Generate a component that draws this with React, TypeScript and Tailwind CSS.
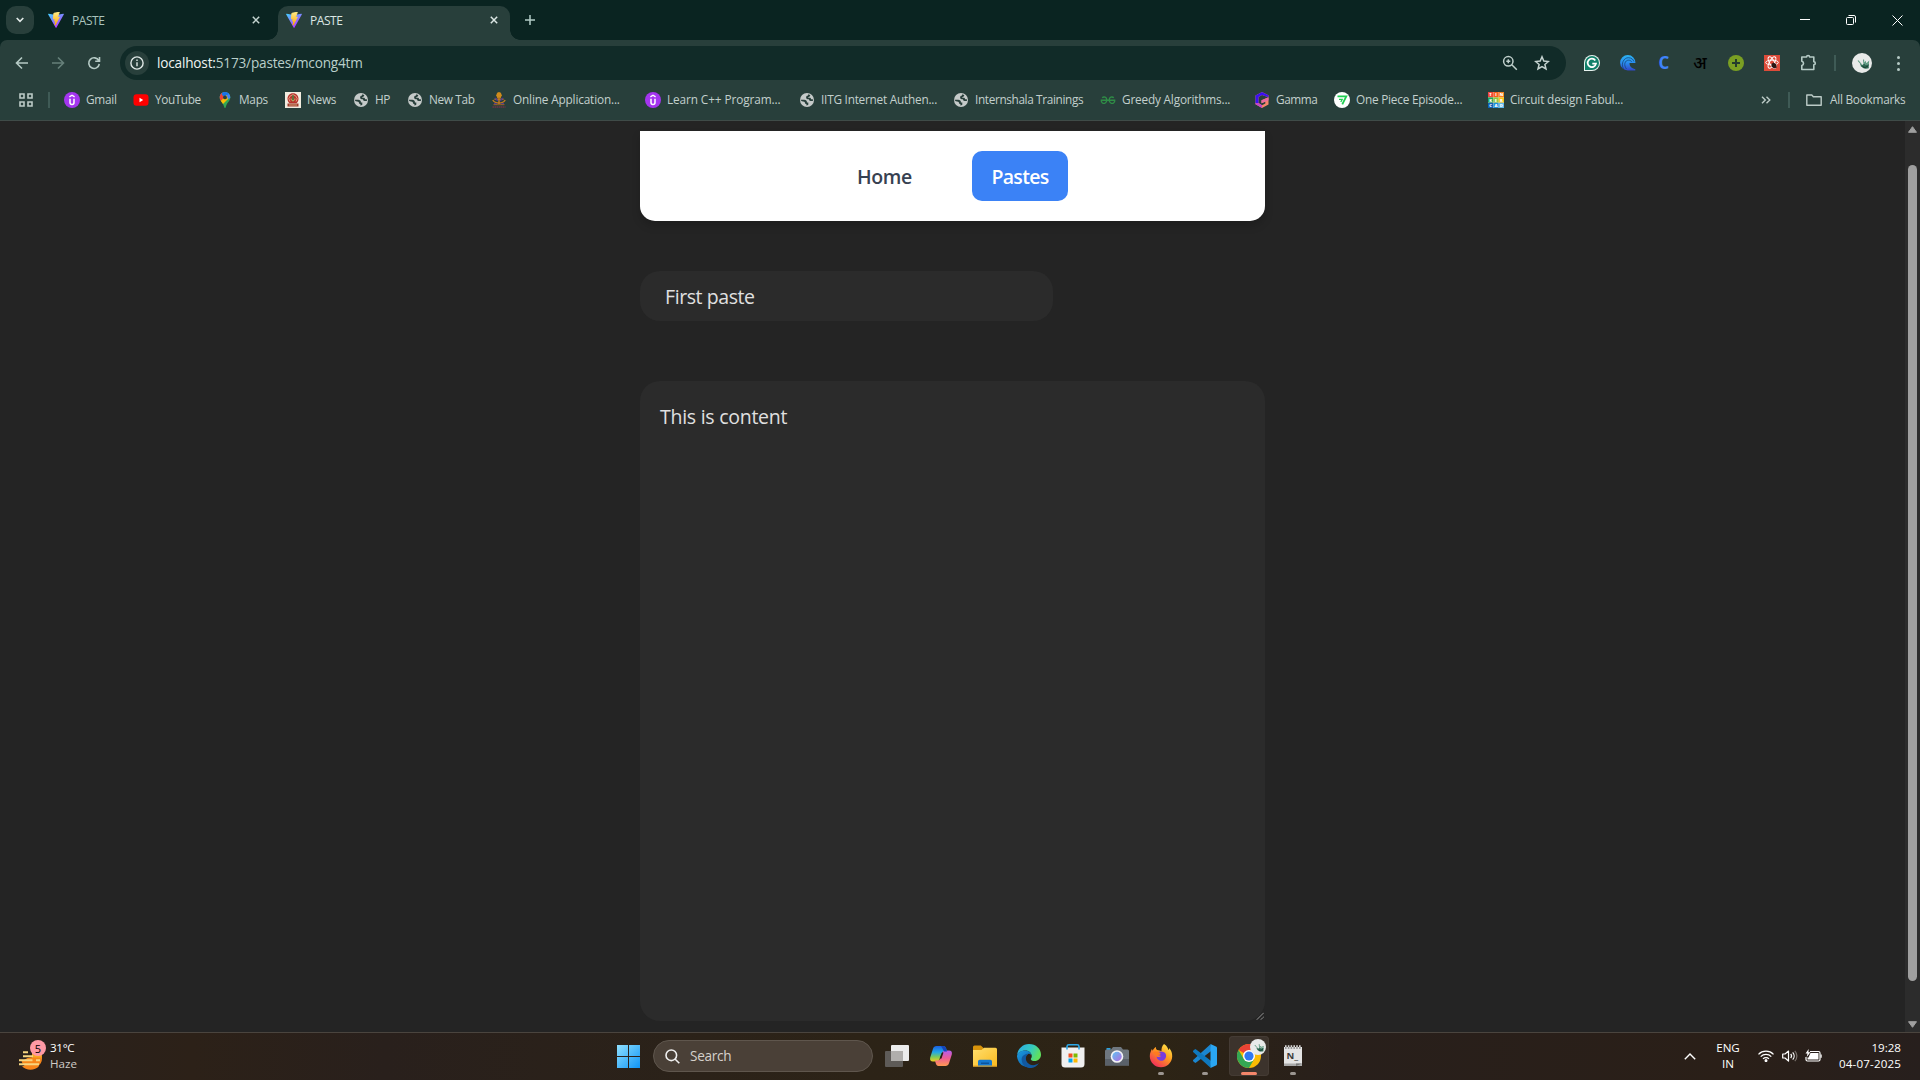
import React from "react";

type IconProps = { className?: string };

const ViteLogo = () => (
  <svg viewBox="0 0 16 16" className="size-4 shrink-0">
    <defs>
      <linearGradient id="viteA" x1="0" y1="0" x2="0.6" y2="1">
        <stop offset="0" stopColor="#41d1ff" />
        <stop offset="1" stopColor="#bd34fe" />
      </linearGradient>
      <linearGradient id="viteB" x1="0" y1="0" x2="0" y2="1">
        <stop offset="0" stopColor="#ffea83" />
        <stop offset="1" stopColor="#ffa800" />
      </linearGradient>
    </defs>
    <path d="M15.8 2.4 8.5 15.6a.5.5 0 0 1-.9 0L.2 2.4a.5.5 0 0 1 .5-.7L8 3l7.300-1.300a.5.5 0 0 1 .5.7Z" fill="url(#viteA)" />
    <path d="M11.300.3 5.900 1.300 5.500 7l1.700-.3-.5 2.500 1.200-.3-.8 4.200 4.200-8-1.900.4.8-2.500Z" fill="url(#viteB)" stroke="url(#viteB)" strokeWidth="1" />
  </svg>
);

const CloseX = ({ className = "" }: IconProps) => (
  <svg viewBox="0 0 8 8" className={"size-2 shrink-0 " + className}>
    <path d="M.8.8l6.400 6.400M7.200.8.8 7.200" stroke="currentColor" strokeWidth="1.500" />
  </svg>
);

const Udemy = () => (
  <svg viewBox="0 0 16 16" className="size-4 shrink-0">
    <circle cx="8" cy="8" r="8" fill="#a435f0" />
    <path d="M5.400 4.900 8 3.300l2.600 1.600" fill="none" stroke="#fff" strokeWidth="1.300" />
    <path d="M6 6.800v3.700a2 2 0 0 0 4 0V6.800" fill="none" stroke="#fff" strokeWidth="1.500" />
  </svg>
);

const YouTube = () => (
  <svg viewBox="0 0 16 16" className="size-4 shrink-0">
    <rect x=".5" y="2.300" width="15" height="11.400" rx="3" fill="#f00" />
    <path d="M6.500 5.800v4.400L10.200 8Z" fill="#fff" />
  </svg>
);

const MapsPin = () => (
  <svg viewBox="0 0 16 16" className="size-4 shrink-0">
    <defs>
      <clipPath id="pin">
        <path d="M8 0a5.300 5.300 0 0 1 5.300 5.400c0 3.600-3.600 4.900-4.600 9.900-.2 1-1.200 1-1.400 0-1-5-4.600-6.300-4.600-9.900A5.300 5.300 0 0 1 8 0Z" />
      </clipPath>
    </defs>
    <g clipPath="url(#pin)">
      <rect width="16" height="16" fill="#34a853" />
      <path d="M0 0h16v5L9 8 0 4Z" fill="#4285f4" />
      <path d="M0 0h5l4 4-6 6-3-3Z" fill="#ea4335" />
      <path d="M5 0h9l-6 5-3-2Z" fill="#1a73e8" />
      <path d="M3 9.800 9.500 3l1.500 4-6 6Z" fill="#fbbc04" />
    </g>
    <circle cx="8" cy="5.400" r="1.900" fill="#283f3b" />
  </svg>
);

const NewsIcon = () => (
  <svg viewBox="0 0 16 16" className="size-4 shrink-0">
    <rect width="16" height="16" fill="#f2ecdf" />
    <path d="M8 1.300c3.500 0 5.500 2.500 5.500 5.500 0 2-1 3.500-2 4.500h-7c-1-1-2-2.500-2-4.500 0-3 2-5.500 5.500-5.500Z" fill="#b8322a" />
    <path d="M5 9.500a4 4 0 1 1 6 0" fill="none" stroke="#eeb79b" strokeWidth=".8" />
    <path d="M8 3.200v6" stroke="#3f8d43" strokeWidth="1.400" />
    <path d="M6 6.500c0 3 4 3 4 0" stroke="#d9c27a" strokeWidth=".9" fill="none" />
    <path d="M2.500 11.500h11v3h-11Z" fill="#a03a2c" />
    <path d="M4 13h8" stroke="#e6cf9a" strokeWidth=".7" />
  </svg>
);

const Globe = () => (
  <svg viewBox="0 0 16 16" className="size-4 shrink-0">
    <circle cx="8" cy="8" r="7" fill="#c5cac9" />
    <path d="M1.600 7.800h3.700c1.600 0 2.600 1 2.600 2.200v.5h1.400v2.300c-.5.5-1.200.8-1.900.8v-1.500c-1-.1-1.600-.7-1.600-1.600v-.6C3.400 9.700 1.800 9 1.600 7.800Z" fill="#283f3b" />
    <path d="M9.300 2.300c1 .2 1.500.5 2 .9-.2 1.200-1 1.700-2 1.800v.8h1.500c.8 0 1.300.6 1.300 1.500h1.800v1.600h-2.300c-1 0-1.600-.6-1.600-1.600-1.500 0-2.900-.4-2.900-1.900 0-1.300.8-1.900 1.900-2Z" fill="#283f3b" />
  </svg>
);

const Emblem = () => (
  <svg viewBox="0 0 16 16" className="size-4 shrink-0">
    <path d="M5.200 3.200 6.200.8 8 0l1.800.8 1 2.400L9.700 6H6.300Z" fill="#d08b1c" />
    <path d="M8 5v7M1.800 8c2.300 4 10.100 4 12.400 0M3.500 7.200h9" stroke="#c07a1e" strokeWidth="1.500" fill="none" />
    <path d="M4 6 6.800 8.700M12 6 9.200 8.700M3 11.500l3 .7M13 11.500l-3 .7" stroke="#4f3a94" strokeWidth="1.500" />
    <path d="M2.500 12.700h11" stroke="#a8651d" strokeWidth=".9" />
    <path d="M1.500 14.900h13" stroke="#6b3548" strokeWidth="1.500" strokeDasharray="1.500 .5" />
  </svg>
);

const Gfg = () => (
  <svg viewBox="0 0 16 16" className="size-4 shrink-0">
    <path
      d="M2.200 5.700C3.900 4.200 6.800 5 6.800 8s-2.700 4-4.400 3C1.500 10.500 1.200 9.500 1.300 8.300h13.400c.1 1.200-.2 2.200-1.100 2.700-1.700 1-4.400 0-4.400-3s2.900-3.800 4.600-2.300"
      fill="none"
      stroke="#2f8d46"
      strokeWidth="1.400"
    />
  </svg>
);

const GammaIcon = () => (
  <svg viewBox="0 0 16 16" className="size-4 shrink-0">
    <path d="M8 0 14.500 3.200v2L8 2.900 4.500 5v6L8 13.200l3.300-1.700V9.700L7.500 11.300V8.200L14.500 5.200v7.300L8 16l-6.500-3.700V3.500Z" fill="#f4856b" />
    <path d="M7.500 8.200 14.500 5.200v3l-7 3.100Z" fill="#e86aa0" />
    <path d="M1.500 10.500 4.500 11 8 13.200 8 16l-6.500-3.700Z" fill="#c247c9" />
    <path d="M8 0l6.500 3.200v2L8 2.900 4.500 5v6l-3 0V3.500Z" fill="#3a10f2" />
  </svg>
);

const OnePiece = () => (
  <svg viewBox="0 0 16 16" className="size-4 shrink-0">
    <circle cx="8" cy="8" r="8" fill="#fff" />
    <path d="M3.500 4.300h8.800L8.300 12.300" fill="none" stroke="#1fce52" strokeWidth="1.800" />
    <path d="M5 7.300h3.200L6.800 10" fill="none" stroke="#1fce52" strokeWidth="1.300" />
  </svg>
);

const tinker = [
  ["T", "#f0473a"],
  ["I", "#f5601f"],
  ["N", "#f58220"],
  ["K", "#1fa55b"],
  ["E", "#8cc63e"],
  ["R", "#f5c518"],
  ["C", "#0f62b5"],
  ["A", "#1d8fdc"],
  ["D", "#5bb8ec"],
];
const Tinkercad = () => (
  <svg viewBox="0 0 16 16" className="size-4 shrink-0">
    <rect width="16" height="16" fill="#f3d9c0" />
    {tinker.map(([c, color], i) => {
      const x = (i % 3) * 5.4;
      const y = Math.floor(i / 3) * 5.4;
      return (
        <g key={c}>
          <rect x={x} y={y} width="5.200" height="5.200" fill={color} />
          <text x={x + 2.6} y={y + 4.1} fontSize="4.200" fontWeight="800" textAnchor="middle" fill="#fff">
            {c}
          </text>
        </g>
      );
    })}
  </svg>
);

const bookmarks: { icon: React.ReactNode; label: string; cell: string; text?: string }[] = [
  { icon: <Udemy />, label: "Gmail", cell: "w-[69px]" },
  { icon: <YouTube />, label: "YouTube", cell: "w-[84px]", text: "tracking-[-0.4px]" },
  { icon: <MapsPin />, label: "Maps", cell: "w-[68px]" },
  { icon: <NewsIcon />, label: "News", cell: "w-[68px]" },
  { icon: <Globe />, label: "HP", cell: "w-[54px]", text: "tracking-[-0.5px]" },
  { icon: <Globe />, label: "New Tab", cell: "w-[84px]", text: "tracking-[-0.35px]" },
  { icon: <Emblem />, label: "Online Application...", cell: "w-[154px]", text: "tracking-[-0.16px]" },
  { icon: <Udemy />, label: "Learn C++ Program...", cell: "w-[154px]", text: "tracking-[-0.1px]" },
  { icon: <Globe />, label: "IITG Internet Authen...", cell: "w-[154px]", text: "tracking-[-0.23px]" },
  { icon: <Globe />, label: "Internshala Trainings", cell: "w-[147px]", text: "tracking-[-0.36px]" },
  { icon: <Gfg />, label: "Greedy Algorithms...", cell: "w-[154px]", text: "tracking-[-0.18px]" },
  { icon: <GammaIcon />, label: "Gamma", cell: "w-[80px]", text: "tracking-[-0.4px]" },
  { icon: <OnePiece />, label: "One Piece Episode...", cell: "w-[154px]", text: "tracking-[-0.22px]" },
  { icon: <Tinkercad />, label: "Circuit design Fabul...", cell: "w-[160px]", text: "tracking-[-0.16px]" },
];

const Avatar = ({ className = "" }: IconProps) => (
  <svg viewBox="0 0 20 20" className={className}>
    <circle cx="10" cy="10" r="10" fill="#e8eae9" />
    <path d="m6 7.500 3 3.500.5 3M11.500 6.500l.5 4.500 1.500-2 .5 2.500L16.500 9l-.5 4" stroke="#5c9a80" strokeWidth="1.100" fill="none" />
    <path d="M8 11c1 .5 2 1.500 3 .5s2-1 2.700.3c1 0 2-.8 3.300-.3-.3 1.200-.4 2.500-.2 3.700-1.800.6-4.200.8-5.800-.2-1.300-.9-2-2.200-3-4Z" fill="#2f6b55" />
    <path d="m10.500 13.500 2.500 1 3-1.500" stroke="#173d30" strokeWidth="1" fill="none" />
  </svg>
);

const TabStrip = () => (
  <div className="flex h-10 items-center pl-1.5">
    <div className="flex size-7 items-center justify-center rounded-[10px] bg-[#283f3b] text-[#e3ebe9]">
      <svg viewBox="0 0 8 6" className="h-1.500 w-2">
        <path d="m.7 1 3.300 3.300L7.300 1" fill="none" stroke="currentColor" strokeWidth="1.600" />
      </svg>
    </div>
    <div className="flex h-10 w-[244px] items-center pr-[18px] pl-3.5 text-[#a9c3bd]">
      <ViteLogo />
      <span className="ml-2 flex-1 pt-px text-[12px] tracking-[-0.45px]">PASTE</span>
      <CloseX className="text-[#c5d5d1]" />
    </div>
    <div className="relative mt-1.5 flex h-[34px] w-[232px] items-center rounded-t-[10px] bg-[#283f3b] pr-3 pb-1.5 pl-2 text-[#dce7e4]">
      <ViteLogo />
      <span className="ml-2 flex-1 pt-px text-[12px] tracking-[-0.45px]">PASTE</span>
      <CloseX />
      <span className="absolute bottom-0 -left-2.5 size-2.5 bg-[radial-gradient(circle_at_0_0,transparent_9.500px,#283f3b_10px)]" />
      <span className="absolute -right-2.5 bottom-0 size-2.5 bg-[radial-gradient(circle_at_100%_0,transparent_9.500px,#283f3b_10px)]" />
    </div>
    <svg viewBox="0 0 10 10" className="ml-[15px] size-2.5 text-[#b3cbc6]">
      <path d="M5 0v10M0 5h10" stroke="currentColor" strokeWidth="1.500" />
    </svg>
    <div className="ml-auto flex items-center pr-[17px] text-white">
      <svg viewBox="0 0 10 10" className="size-2.5">
        <path d="M0 4.500h10" stroke="currentColor" />
      </svg>
      <svg viewBox="0 0 10 10" className="ml-9 size-2.5" fill="none" stroke="currentColor">
        <rect x=".5" y="2.500" width="7" height="7" rx="1" />
        <path d="M2.500.5H8a1.500 1.500 0 0 1 1.500 1.500v5.500" />
      </svg>
      <svg viewBox="0 0 11 11" className="ml-9 size-[11px]">
        <path d="m.5.500 10 10m0-10-10 10" stroke="currentColor" />
      </svg>
    </div>
  </div>
);

const Toolbar = () => (
  <div className="flex h-[46px] items-center pr-2.5">
    <div className="flex w-[120px] items-center pl-[15px] text-[#b5cac5]">
      <svg viewBox="0 0 14 14" className="size-3.5" fill="none" stroke="currentColor" strokeWidth="1.600">
        <path d="M13 7H2M7 1.500 1.500 7 7 12.500" />
      </svg>
      <svg viewBox="0 0 14 14" className="ml-[22px] size-3.5 text-[#66807a]" fill="none" stroke="currentColor" strokeWidth="1.600">
        <path d="M1 7h11M7 1.500 12.500 7 7 12.500" />
      </svg>
      <svg viewBox="0 0 14 14" className="ml-[22px] size-3.5" fill="none" stroke="currentColor" strokeWidth="1.600">
        <path d="M11.800 4.700A5.300 5.300 0 1 0 12.300 8M12.500 1v4.300H8.200" />
      </svg>
    </div>
    <div className="flex h-[34px] w-[1446px] items-center rounded-full bg-[#112b28] pr-4 pl-[5px]">
      <div className="flex size-6 items-center justify-center rounded-full bg-[#283f3b]">
        <svg viewBox="0 0 14 14" className="size-3.5" fill="none" stroke="#dfe8e6" strokeWidth="1.400">
          <circle cx="7" cy="7" r="6.100" />
          <path d="M7 6.300v4M7 3.600v1.500" />
        </svg>
      </div>
      <div className="ml-2 pt-px text-[13.600px] tracking-[-0.18px] text-[#b9cfca]">
        <span className="text-[#eef4f2]">localhost:</span>5173/pastes/mcong4tm
      </div>
      <svg viewBox="0 0 16 16" className="ml-auto size-4 text-[#bfcfcb]" fill="none" stroke="currentColor" strokeWidth="1.500">
        <circle cx="6.300" cy="6.300" r="4.700" />
        <path d="m9.800 9.800 5 5M6.300 4.300v4M4.300 6.300h4" />
      </svg>
      <svg viewBox="0 0 16 16" className="ml-4 size-4 text-[#c5d3d0]" fill="none" stroke="currentColor" strokeWidth="1.500">
        <path d="m8 1.800 1.800 4.300 4.600.4-3.500 3 1.100 4.500-4-2.400L4 14l1.100-4.500-3.500-3 4.600-.4Z" />
      </svg>
    </div>
    <div className="flex items-center pl-2">
      <div className="flex w-9 justify-center">
        <svg viewBox="0 0 16 16" className="size-4">
          <path d="M8 0a8 8 0 1 1 0 16H0V8a8 8 0 0 1 8-8Z" fill="#e8f3ef" />
          <path d="M8 1a7 7 0 1 1 0 14H1V8a7 7 0 0 1 7-7Z" fill="#12806a" />
          <path d="M11.300 5.400A4.200 4.200 0 1 0 12 8.700H8.300" fill="none" stroke="#fff" strokeWidth="1.700" />
        </svg>
      </div>
      <div className="flex w-9 justify-center">
        <svg viewBox="0 0 16 16" className="size-4">
          <defs>
            <linearGradient id="wave" x1="0" y1="0" x2="0" y2="1">
              <stop offset="0" stopColor="#2bb3f0" />
              <stop offset=".5" stopColor="#2a8df0" />
              <stop offset="1" stopColor="#3047c8" />
            </linearGradient>
          </defs>
          <path d="M15.500 8H9.500c0 3.500 2 5 5.800 6.300v1.200H8A7.700 7.700 0 1 1 15.500 8Z" fill="url(#wave)" />
          <path d="M3.500 14C.5 8.500 4 2.700 8.300 2.700c3.300 0 5 2 5.600 3.700M6.500 14C3.300 10 4.800 5.200 8.600 5.200c1.600 0 2.600.7 3.100 1.700" fill="none" stroke="#17477e" strokeWidth=".8" />
        </svg>
      </div>
      <div className="flex w-9 justify-center text-[17px] leading-5 font-bold text-[#3f83f8]">C</div>
      <div className="flex w-9 justify-center pt-[3px] font-['Noto_Sans_Devanagari','Noto_Sans',sans-serif] text-[17px] leading-5 font-medium text-black">अ</div>
      <div className="flex w-9 justify-center">
        <svg viewBox="0 0 16 16" className="size-4">
          <circle cx="8" cy="8" r="8" fill="#7a9f23" />
          <path d="M8 4v8M4 8h8" stroke="#243c2c" strokeWidth="2" />
        </svg>
      </div>
      <div className="flex w-9 justify-center">
        <svg viewBox="0 0 16 16" className="size-4">
          <rect width="16" height="16" fill="#dd4b39" />
          <g fill="none" stroke="#fff" strokeWidth="1">
            <ellipse cx="8" cy="7.500" rx="6.300" ry="2.400" />
            <ellipse cx="8" cy="7.500" rx="6.300" ry="2.400" transform="rotate(60 8 7.500)" />
            <ellipse cx="8" cy="7.500" rx="6.300" ry="2.400" transform="rotate(120 8 7.500)" />
          </g>
          <path d="m7.500 9 2-1.500 2.500 1.500.8 3.500-2.800 1-2.500-2Z" fill="#2a1512" />
        </svg>
      </div>
      <div className="flex w-[37px] justify-center">
        <svg viewBox="0 0 17 17" className="mb-0.5 size-[17px] text-[#b5cac5]" fill="none" stroke="currentColor" strokeWidth="1.600">
          <path d="M1.800 3h4.800a1.500 1.500 0 0 1 3 0h4.200v4.700a1.500 1.500 0 0 1 0 3v4.800h-12v-4a2.200 2.200 0 0 0 0-4.300Z" strokeLinejoin="round" />
        </svg>
      </div>
      <div className="ml-[7px] h-4 w-0.5 bg-[#3f5b56]" />
      <Avatar className="ml-4 size-5" />
      <div className="ml-[25px] flex flex-col gap-[3px]">
        <span className="size-[3px] rounded-full bg-[#b5cac5]" />
        <span className="size-[3px] rounded-full bg-[#b5cac5]" />
        <span className="size-[3px] rounded-full bg-[#b5cac5]" />
      </div>
    </div>
  </div>
);

const BookmarkBar = () => (
  <div className="flex h-[28px] items-center text-[11.800px] whitespace-nowrap text-[#c3d0cd]">
    <div className="flex w-16 items-center pl-[19px]">
      <svg viewBox="0 0 14 14" className="size-3.5" fill="none" stroke="#bccbc7" strokeWidth="1.600">
        <path d="M1 1h4v4H1ZM9 1h4v4H9ZM1 9h4v4H1ZM9 9h4v4H9Z" />
      </svg>
      <div className="ml-[15px] h-4 w-0.5 bg-[#3f5b56]" />
    </div>
    {bookmarks.map((b, i) => (
      <div key={i} className={"flex shrink-0 items-center gap-1.5 " + b.cell}>
        {b.icon}
        <span className={b.text ?? "tracking-[-0.27px]"}>{b.label}</span>
      </div>
    ))}
    <div className="ml-auto flex items-center pr-[15px]">
      <svg viewBox="0 0 10 8" className="h-2 w-2.5" fill="none" stroke="#bccbc7" strokeWidth="1.400">
        <path d="m1 .7 3.300 3.300L1 7.300M5.500.700 8.800 4 5.500 7.300" />
      </svg>
      <div className="ml-[17px] h-4 w-0.5 bg-[#3f5b56]" />
      <svg viewBox="0 0 16 12" className="ml-4 h-3 w-4" fill="none" stroke="#bccbc7" strokeWidth="1.400" strokeLinejoin="round">
        <path d="M.8 1h5l1.500 1.700h7.900v8.500H.8Z" />
      </svg>
      <span className="ml-2 w-[75px] tracking-[-0.25px]">All Bookmarks</span>
    </div>
  </div>
);

const PageContent = () => (
  <div className="flex h-[911px] bg-[#242424]">
    <div className="flex flex-1 justify-center overflow-hidden pt-2.5">
      <div className="w-[625px] font-['Open_Sans','Noto_Sans',sans-serif]">
        <nav className="flex h-[90px] items-center rounded-b-[15px] bg-white pl-[217px] text-[19.500px] font-semibold shadow-[0_5px_8px_rgba(0,0,0,0.18)]">
          <a className="w-[115px] pt-0.5 tracking-[-0.4px] text-[#374151]">Home</a>
          <a className="flex h-[50px] w-24 items-center justify-center rounded-[10px] bg-[#3b82f6] pt-0.5 tracking-[-0.7px] text-white">Pastes</a>
        </nav>
        <div className="mt-[50px] flex h-[50px] w-[413px] items-center rounded-[20px] bg-[#2b2b2b] pt-0.5 pl-[25px] text-[19.500px] tracking-[-0.42px] text-[#e0e0e0]">
          First paste
        </div>
        <div className="relative mt-[60px] h-[640px] rounded-[20px] bg-[#2b2b2b] pt-5 pl-5 text-[19.500px] leading-[31px] tracking-[-0.26px] text-[#e0e0e0]">
          This is content
          <svg viewBox="0 0 8 8" className="absolute right-px bottom-px size-2">
            <path d="M1 7.500 7.500 1M5 7.500 7.500 5" stroke="#c8c8c8" strokeDasharray="1.200 .3" />
          </svg>
        </div>
      </div>
    </div>
    <div className="flex w-[15px] flex-col items-center bg-[#2c2c2c] pt-[5px] pb-1">
      <svg viewBox="0 0 9 7" className="h-[7px] w-[9px]">
        <path d="M4.500.700 8.500 6.300h-8Z" fill="#9f9f9f" stroke="#9f9f9f" strokeLinejoin="round" />
      </svg>
      <div className="mt-8 h-[816px] w-[9px] rounded-full bg-[#9f9f9f]" />
      <svg viewBox="0 0 9 7" className="mt-auto h-[7px] w-[9px]">
        <path d="M4.500 6.300.500.700h8Z" fill="#9f9f9f" stroke="#9f9f9f" strokeLinejoin="round" />
      </svg>
    </div>
  </div>
);

const WindowsLogo = () => (
  <svg viewBox="0 0 23 23" className="size-[23px]">
    <defs>
      <linearGradient id="win" x1="0" y1="0" x2="23" y2="23" gradientUnits="userSpaceOnUse">
        <stop offset="0" stopColor="#8fe0ff" />
        <stop offset="1" stopColor="#0f94f5" />
      </linearGradient>
    </defs>
    <path d="M0 0h11v11H0ZM12 0h11v11H12ZM0 12h11v11H0ZM12 12h11v11H12Z" fill="url(#win)" />
  </svg>
);

const TaskView = () => (
  <svg viewBox="0 0 24 24" className="size-6">
    <rect x="6" y="1" width="18" height="16" rx="1" fill="#ececec" />
    <rect x="0" y="7" width="18" height="16" rx="1" fill="#5e5b58" />
    <path d="M6 7h12v10H6Z" fill="#b0aeac" />
  </svg>
);

const Copilot = () => (
  <svg viewBox="0 0 24 24" className="size-6">
    <defs>
      <linearGradient id="cpA" x1="0" y1="0" x2="0" y2="1">
        <stop offset="0" stopColor="#1b5fe0" />
        <stop offset=".4" stopColor="#22a7e8" />
        <stop offset=".7" stopColor="#7bc95b" />
        <stop offset="1" stopColor="#f2cf1d" />
      </linearGradient>
      <linearGradient id="cpB" x1="0" y1="0" x2="0" y2="1">
        <stop offset="0" stopColor="#b45cf0" />
        <stop offset=".5" stopColor="#ee5d94" />
        <stop offset="1" stopColor="#ff9a52" />
      </linearGradient>
    </defs>
    <path d="M7.500 2h7c1.500 0 2.200 1 2.700 2.500L18 7.500h-3c-1.500 0-2.200 1-2.700 2.500L10.700 15c-.6 1.700-1.400 2.500-2.900 2.500H4C1.700 17.500.6 16 1.200 13.500L4 4.700C4.600 3 5.700 2 7.500 2Z" fill="url(#cpA)" />
    <path d="M16.500 22h-7c-1.500 0-2.200-1-2.700-2.500L6 16.500h3c1.500 0 2.200-1 2.700-2.500L13.300 9c.6-1.700 1.400-2.500 2.900-2.500H20c2.300 0 3.400 1.500 2.800 4L20 19.300c-.6 1.700-1.700 2.700-3.500 2.700Z" fill="url(#cpB)" />
    <path d="m12 2 2.500 0c1.500 0 2.200 1 2.700 2.500L18 7.500h-3l-1.500-3Z" fill="#1546b8" />
    <path d="m10.500 14.500 2.700-6h1.300l-2 6Z" fill="#2c2115" />
  </svg>
);

const Explorer = () => (
  <svg viewBox="0 0 24 24" className="size-6">
    <defs>
      <linearGradient id="folder" x1="0" y1="0" x2="1" y2="1">
        <stop offset="0" stopColor="#ffdf6e" />
        <stop offset="1" stopColor="#f9b91f" />
      </linearGradient>
    </defs>
    <path d="M0 3A1.500 1.500 0 0 1 1.500 1.500h6.300L10.500 4v5H0Z" fill="#d9940b" />
    <path d="M0 6h8.500L11 3.800h11.500A1.500 1.500 0 0 1 24 5.300V22.500H0Z" fill="url(#folder)" />
    <path d="M5 22.500v-5a1.700 1.700 0 0 1 1.700-1.700h10.600a1.700 1.700 0 0 1 1.700 1.700v5Z" fill="#1479d1" />
    <path d="M8 19.200h8" stroke="#0a4f96" strokeWidth="1.300" />
    <path d="M0 21.500h24v1H0Z" fill="#e8a422" />
  </svg>
);

const Edge = () => (
  <svg viewBox="0 0 24 24" className="size-6">
    <defs>
      <linearGradient id="edA" x1="0" y1="0" x2="1" y2=".4">
        <stop offset="0" stopColor="#2aa8e8" />
        <stop offset=".6" stopColor="#35c9c0" />
        <stop offset="1" stopColor="#5fe05f" />
      </linearGradient>
      <linearGradient id="edB" x1="0" y1="0" x2="1" y2="1">
        <stop offset="0" stopColor="#1b9de2" />
        <stop offset="1" stopColor="#0b4f9e" />
      </linearGradient>
    </defs>
    <path d="M.1 11C.8 4.700 5.800 0 12 0c7 0 12 5 12 10.500 0 4-3 6.500-6.300 6.500-2.500 0-3.900-1-3.900-1.800 0-.7 1-1.200 1-3.100C14.800 9 12 6.500 8.500 6.500 4 6.500.8 9 .1 11Z" fill="url(#edA)" />
    <path d="M0 12.500C0 9 3.600 6.500 8 6.500c3.600 0 6 2 6.500 4.500-1-1-2.200-1.300-3-1.300-3 1.300-3.500 4-3 6.300 1 4 5 6.500 9.500 5.800A12 12 0 0 1 0 12.500Z" fill="url(#edB)" />
    <path d="M11.500 9.700c-3 1.800-3.500 6-1.200 8.900 2.700 3.200 7.700 3.400 11.700.5-3 5-9 6.200-13.200 3.700-4-2.400-5.500-8-2.700-11 1.500-1.600 3.700-2.200 5.400-2.100Z" fill="#12589f" />
  </svg>
);

const Store = () => (
  <svg viewBox="0 0 24 24" className="size-6">
    <path d="M.500 3.500h23v16.500a3.500 3.500 0 0 1-3.500 3.500H4A3.500 3.500 0 0 1 .5 20Z" fill="#f0f0f0" />
    <path d="M6 5.500V2.500A1.800 1.800 0 0 1 7.800.8h8.400A1.800 1.800 0 0 1 18 2.500v3" fill="none" stroke="#2ba9ea" strokeWidth="1.600" />
    <path d="M7.500 9.500h4v4h-4Z" fill="#f25022" />
    <path d="M12.500 9.500h4v4h-4Z" fill="#7fba00" />
    <path d="M7.500 14.500h4v4h-4Z" fill="#00a4ef" />
    <path d="M12.500 14.500h4v4h-4Z" fill="#ffb900" />
  </svg>
);

const Camera = () => (
  <svg viewBox="0 0 24 24" className="size-6">
    <path d="M1.500 4h4v2.500h-4Z" fill="#2aa3e0" />
    <path d="M8 3h8l2 2.500h4.500A1.500 1.500 0 0 1 24 7v14.500H0V7a1.500 1.500 0 0 1 1.500-1.500H6Z" fill="#6f777f" />
    <path d="M0 15h24v6.500H0Z" fill="#5a6169" />
    <circle cx="12" cy="12.500" r="6.300" fill="#f4f4f6" />
    <circle cx="12" cy="12.500" r="4.700" fill="url(#lens)" />
    <defs>
      <linearGradient id="lens" x1="0" y1="0" x2="1" y2="1">
        <stop offset="0" stopColor="#5fc3f2" />
        <stop offset="1" stopColor="#b36be0" />
      </linearGradient>
    </defs>
  </svg>
);

const Firefox = () => (
  <svg viewBox="0 0 24 24" className="size-6">
    <defs>
      <linearGradient id="ff" x1=".9" y1="0" x2=".2" y2="1">
        <stop offset="0" stopColor="#fff04d" />
        <stop offset=".45" stopColor="#ff9a1f" />
        <stop offset="1" stopColor="#f0245f" />
      </linearGradient>
    </defs>
    <path d="M15 0c3.300 2 4 4.500 4.500 6 .6-.4.700-1.200.6-2C22.500 6.300 23.300 9.500 23.200 12.500 23 18.500 18 23.300 12 23.300S.8 18.500.8 12.300c0-3.300 1.200-5.300 2-7.300.5.600.6 1 .8 1.800C4.500 5 5.700 3.600 7 3c-.2 1.200.1 2.200 1 3 2 .2 3.300.500 4.500 1C12.300 4.500 13 2 15 0Z" fill="url(#ff)" />
    <path d="M8 8.300c2.700-.9 5.500-1 7.500.3 2.500 2 2 6.200-.8 7.600-3.300 1.500-7-.5-7-3.800 1.500.9 3.500.6 4.300-.4-1.500-.5-3.500-.8-4.400-1.700Z" fill="#7a3bdc" />
    <path d="M4 8.500c1.800-1.500 5-1.300 7 .3 1 .8.5 1.700-.6 1.900-1.600.3-2.400.8-2.700 1.800" fill="#ff7a1f" />
  </svg>
);

const VSCode = () => (
  <svg viewBox="0 0 24 24" className="size-6">
    <path d="m17.500.3 1 6.500L3.500 18.200 2.300 19 .4 17.400c-.6-.5-.6-1.200 0-1.700Z" fill="#1b86cf" />
    <path d="m17.500 23.700 1-6.500L3.500 5.800 2.300 5 .4 6.600c-.6.5-.6 1.200 0 1.700Z" fill="#0f78be" />
    <path d="M17.500 0 23 2.500a1.600 1.600 0 0 1 1 1.500v16a1.600 1.600 0 0 1-1 1.500L17.500 24Z" fill="#2aa6f2" />
  </svg>
);

const Chrome = () => (
  <svg viewBox="0 0 24 24" className="size-6">
    <circle cx="12" cy="12" r="12" fill="#fbbc04" />
    <path d="M12 12 1.600 6A12 12 0 0 1 22.400 6H12Z" fill="#ea4335" />
    <path d="M1.600 6A12 12 0 0 0 12 24l5.200-9-5.200 3-5.200-3Z" fill="#34a853" />
    <circle cx="12" cy="12" r="6" fill="#fff" />
    <circle cx="12" cy="12" r="4.600" fill="#3079f0" />
  </svg>
);

const Notepad = () => (
  <svg viewBox="0 0 18 22" className="h-[22px] w-[18px]">
    <path d="M0 2h18v18a1 1 0 0 1-1 1H1a1 1 0 0 1-1-1Z" fill="#e4e4e4" />
    <path d="M0 18.500h18V20a1 1 0 0 1-1 1H1a1 1 0 0 1-1-1Z" fill="#a9a9a9" />
    <path d="M12 21v-2.500h6Z" fill="#777" />
    <path d="M1 1.300h16" stroke="#d8d8d8" strokeWidth="2" strokeDasharray="1.600 1.200" />
    <path d="M1 3h16" stroke="#555" strokeWidth="1" strokeDasharray="1.600 1.200" />
    <text x="2.600" y="14" fontSize="9.500" fontWeight="700" fill="#3b3b3b">
      N_
    </text>
  </svg>
);

const apps: { icon: React.ReactNode; mark?: boolean; active?: boolean }[] = [
  { icon: <TaskView /> },
  { icon: <Copilot /> },
  { icon: <Explorer /> },
  { icon: <Edge /> },
  { icon: <Store /> },
  { icon: <Camera /> },
  { icon: <Firefox />, mark: true },
  { icon: <VSCode />, mark: true },
  { icon: <Chrome />, mark: true, active: true },
  { icon: <Notepad />, mark: true },
];

const Taskbar = () => (
  <div className="flex h-12 items-center border-t border-[#4a443e] bg-[linear-gradient(90deg,#29211d_0%,#2c2118_10%,#29201c_20%,#2c2317_45%,#2d2415_60%,#281f1b_70%,#2a1f18_90%,#271f1d_100%)] pb-px text-white">
    <div className="flex w-[617px] items-center pl-[19px]">
      <div className="relative h-7 w-[27px]">
        <svg viewBox="0 0 24 28" className="h-7 w-6">
          <path d="M2.500 19.500a10.200 10.200 0 0 0 20-6.500l-8 2-6 1Z" fill="#f6861a" />
          <path d="M13 15.500h9.800a9 9 0 0 0-.5-4.500H13Z" fill="#f9a825" />
          <path d="M4 10.300h5M4 14.300h10M0 18.300h13.500M17 18.300h4M0 22.300h20" stroke="#f7d680" strokeWidth="2" />
          <path d="M3 24c4 5 13 5 17 0Z" fill="#f6861a" />
        </svg>
        <span className="absolute -top-0.5 right-0 flex size-4 items-center justify-center rounded-full bg-[#ff99a4] text-[11px] leading-none text-black">5</span>
      </div>
      <div className="ml-1 pb-px text-[11.600px] leading-4">
        <div className="tracking-[-0.3px]">31°C</div>
        <div className="text-[#cfcac6]">Haze</div>
      </div>
    </div>
    <WindowsLogo />
    <div className="ml-[13px] flex h-8 w-[220px] items-center rounded-full border border-[#5f564d] bg-[#4a4037] pl-[11px] text-[13.600px] text-[#d5d0cb]">
      <svg viewBox="0 0 15 15" className="size-[15px]" fill="none" stroke="#f0f0f0" strokeWidth="1.600">
        <circle cx="6.300" cy="6.300" r="5.300" />
        <path d="m10 10 4.300 4.300" />
      </svg>
      <span className="ml-[10px] tracking-[-0.3px]">Search</span>
    </div>
    <div className="ml-0.5 flex">
      {apps.map((a, i) => (
        <div key={i} className="flex w-11 justify-center">
          <div className={"relative flex size-10 items-center justify-center rounded " + (a.active ? "bg-[#3c332c] ring-1 ring-[#443b34] ring-inset" : "")}>
            {a.icon}
            {a.active && <Avatar className="absolute top-[3px] right-[3px] size-4" />}
            {a.mark && (
              <span className={"absolute bottom-px h-[3px] rounded-full " + (a.active ? "w-4 bg-[#f4866a]" : "w-1.5 bg-[#9c9691]")} />
            )}
          </div>
        </div>
      ))}
    </div>
    <div className="ml-auto flex items-center pr-[19px] text-[11.600px] leading-4">
      <svg viewBox="0 0 12 7" className="h-[7px] w-3" fill="none" stroke="#fff" strokeWidth="1.400">
        <path d="M.8 6.200 6 1l5.200 5.200" />
      </svg>
      <div className="ml-5 w-6 text-center">
        <div>ENG</div>
        <div>IN</div>
      </div>
      <svg viewBox="0 0 16 12" className="ml-[18px] h-3 w-4" fill="none" stroke="#fff" strokeWidth="1.200">
        <path d="M.5 4.300a10.500 10.500 0 0 1 15 0M2.700 6.600a7.400 7.400 0 0 1 10.600 0M5 8.900a4.200 4.200 0 0 1 6 0" />
        <circle cx="8" cy="10.600" r=".9" fill="#fff" />
      </svg>
      <svg viewBox="0 0 16 14" className="ml-2 h-3.5 w-4" fill="none" stroke="#fff" strokeWidth="1.200">
        <path d="M.7 5v4H3l3.500 3V2L3 5Z" strokeLinejoin="round" />
        <path d="M8.700 5a3 3 0 0 1 0 4M10.700 3.300a5.500 5.500 0 0 1 0 7.400" />
        <path d="M12.800 1.800a7.500 7.500 0 0 1 0 10.400" stroke="#7a726c" />
      </svg>
      <svg viewBox="0 0 17 13" className="mb-px ml-[7px] h-[13px] w-[17px]">
        <path d="M5 2.500h8.500A1.500 1.500 0 0 1 15 4v6.500a1.500 1.500 0 0 1-1.500 1.500H2.500A1.500 1.500 0 0 1 1 10.500V8" fill="none" stroke="#fff" strokeWidth="1.200" />
        <path d="M5.500 4h8v6.500h-11V8.500h1Z" fill="#fff" />
        <path d="M3.700 0 .5 4.500h2L1.700 8l3.700-4.700H3.400Z" fill="#fff" />
        <path d="M15.500 5.500h1.200v3.300h-1.200Z" fill="#fff" />
      </svg>
      <div className="ml-3 w-[67px] pb-px text-right whitespace-nowrap">
        <div>19:28</div>
        <div className="tracking-[0.150px]">04-07-2025</div>
      </div>
    </div>
  </div>
);

export default function App() {
  return (
    <div className="h-[1080px] w-[1920px] overflow-hidden bg-[#0a2421] font-['Open_Sans','Noto_Sans',sans-serif]">
      <TabStrip />
      <div className="h-[81px] rounded-t-[7px] border-b border-[#3f4b48] bg-[#283f3b]">
        <Toolbar />
        <BookmarkBar />
      </div>
      <PageContent />
      <Taskbar />
    </div>
  );
}
